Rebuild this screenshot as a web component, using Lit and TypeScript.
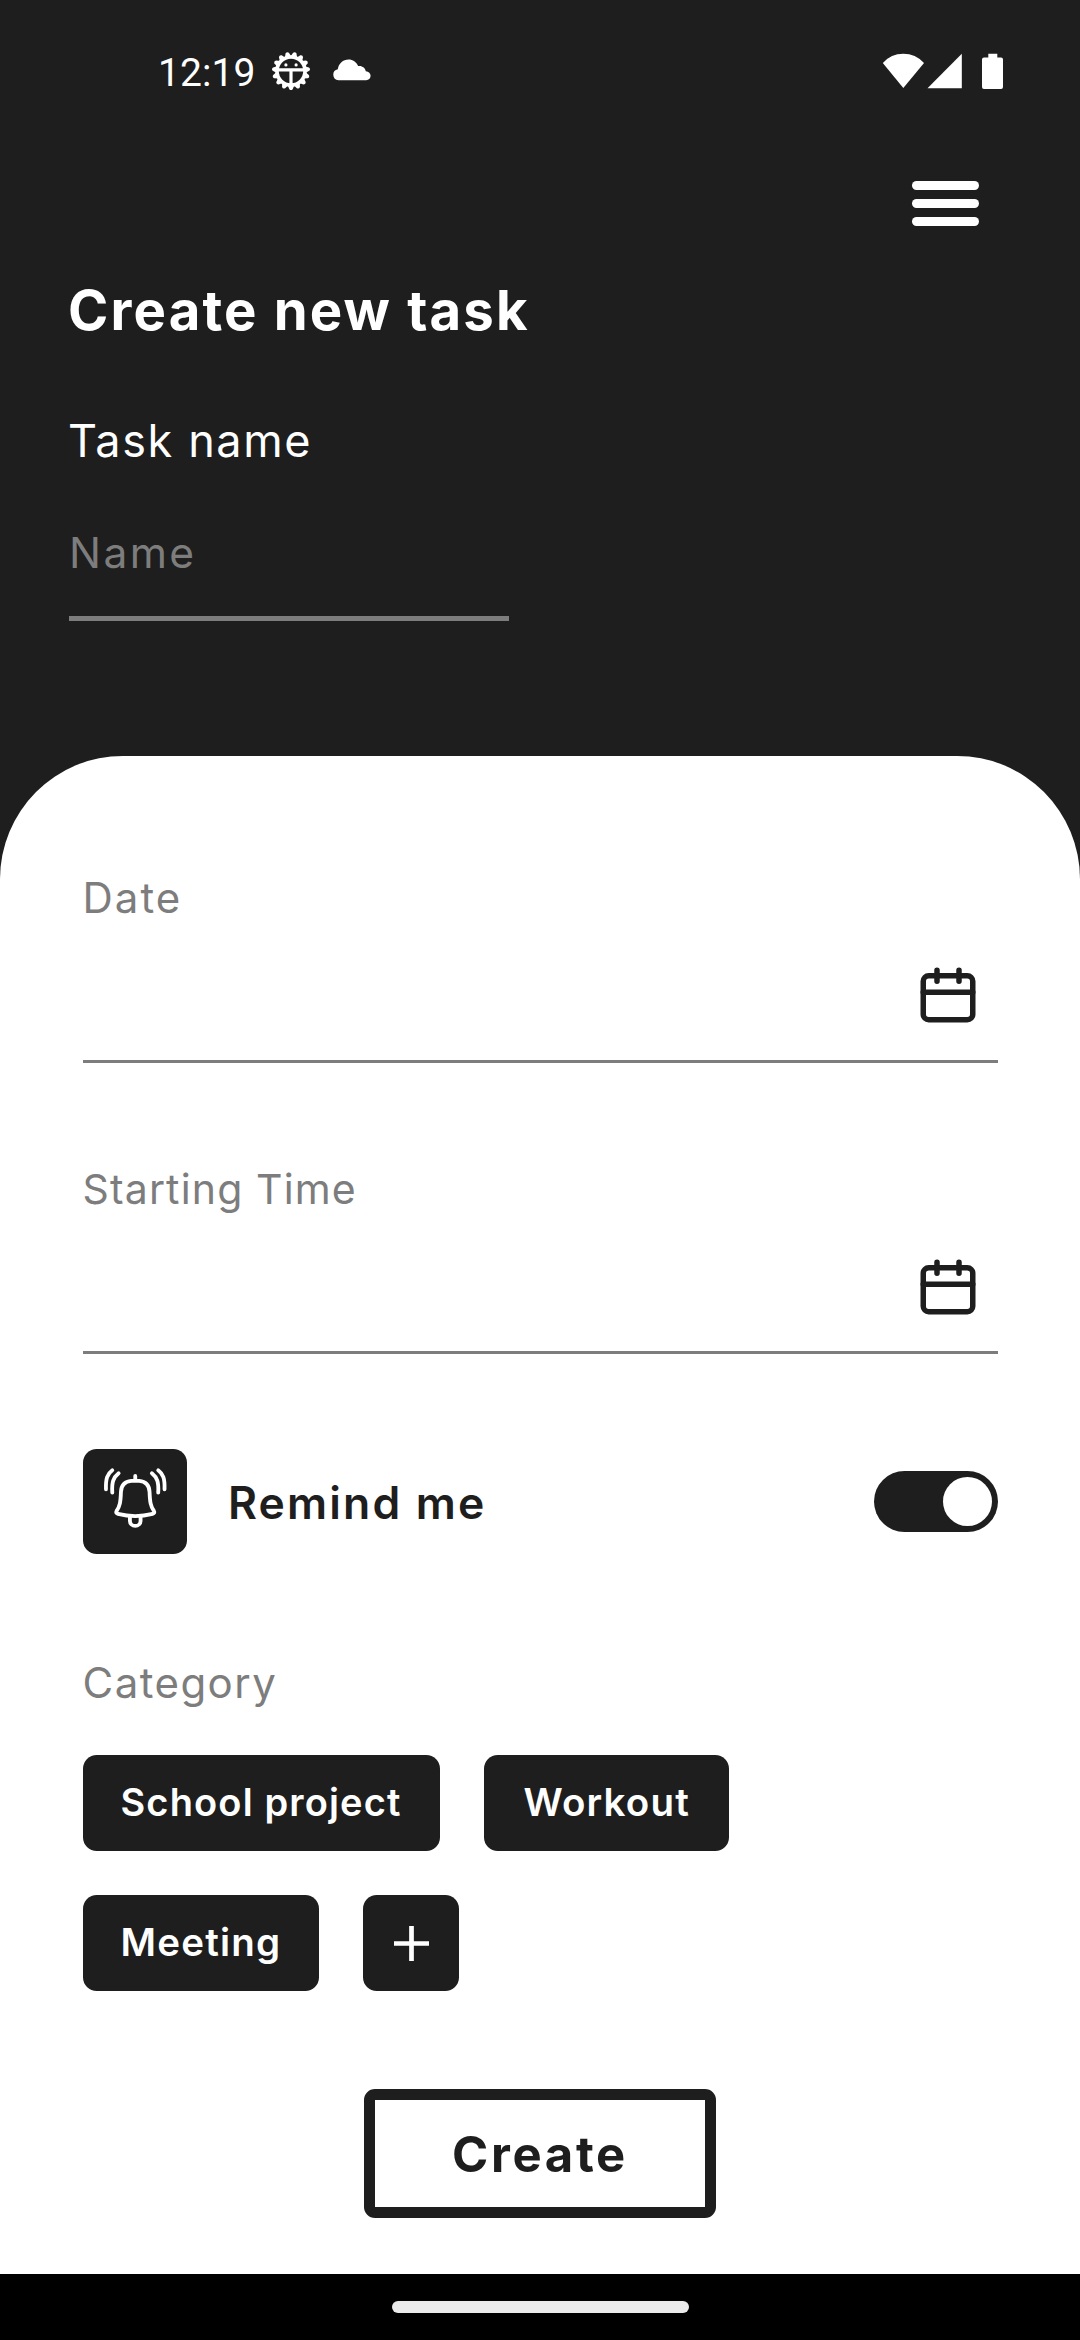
import { LitElement, html, css, svg } from 'lit';
import { customElement, property, state } from 'lit/decorators.js';
import { classMap } from 'lit/directives/class-map.js';

const gearTeeth = Array.from({ length: 15 }, (_, i) => 90 + i * 24);

@customElement('status-bar')
class StatusBar extends LitElement {
  static styles = css`
    :host {
      display: flex;
      align-items: center;
      height: 142px;
      box-sizing: border-box;
      padding: 0 76px 0 158px;
      color: #fff;
      font: 400 39px/46px Roboto, sans-serif;
    }
    svg { display: block; fill: #fff; }
    .time { letter-spacing: 0.1px; margin-top: 3px; width: 113px; }
    .gear { width: 40px; height: 40px; }
    .cloud { width: 38px; height: 22px; margin-left: 22px; margin-top: -2px; }
    .system { width: 122px; height: 38px; margin-left: auto; }
  `;

  render() {
    return html`
      <span class="time">12:19</span>
      <svg class="gear" viewBox="0 0 40 40">
        <circle cx="20" cy="20" r="14" fill="none" stroke="#fff" stroke-width="3.600"></circle>
        ${gearTeeth.map(
          (a) => svg`<path d="M34 16.600 L38.200 18.300 Q40 20 38.200 21.700 L34 23.400Z" transform="rotate(${a} 20 20)"></path>`,
        )}
        <path d="M7 17.200h26v3.200H21.600V33h-3.200V20.400H7z"></path>
        <circle cx="14.900" cy="13.900" r="1.600"></circle>
        <circle cx="25.100" cy="13.900" r="1.600"></circle>
      </svg>
      <svg class="cloud" viewBox="0 0 38 22">
        <path d="M5.500 21.200A5.500 5.500 0 0 1 4.800 10.300C5.600 4.600 10 .6 15.600.6c4.200 0 7.800 2.500 9.500 6.400C29 6.300 32.300 8.800 32.800 12.200 35.800 12.500 37.600 14.500 37.600 16.800 37.600 19.300 35.700 21.200 33.200 21.200Z"></path>
      </svg>
      <svg class="system" viewBox="0 0 122 38">
        <path d="M.8 11Q9 1.800 21.300 1.800T42 11L21.300 36Z"></path>
        <path d="M45.500 36.200L79.800 1.800V36.200Z"></path>
        <path d="M106.300 1.800h9v3.800h3.700q2 0 2 2V35q0 2-2 2h-17q-2 0-2-2V7.600q0-2 2-2h4.300z"></path>
      </svg>
    `;
  }
}

@customElement('picker-field')
class PickerField extends LitElement {
  @property() label = '';

  static styles = css`
    :host { display: block; border-bottom: 3px solid #7d7d7d; height: 186.400px; }
    .label {
      padding-bottom: 1px;
      font-size: var(--label-size, 42px);
      line-height: 49px;
      color: #7d7d7d;
      letter-spacing: var(--tracking, 2px);
    }
    .value { display: flex; justify-content: flex-end; padding: 39px 16.500px 0 0; }
    svg { width: 66px; height: 66px; fill: none; stroke: #1e1e1e; stroke-width: 2; stroke-linecap: round; }
  `;

  render() {
    return html`
      <div class="label">${this.label}</div>
      <div class="value">
        <svg viewBox="0 0 24 24">
          <rect x="3" y="5" width="18" height="16" rx="2"></rect>
          <path d="M16 3v4M8 3v4M3 11h18"></path>
        </svg>
      </div>
    `;
  }
}

@customElement('app-root')
class AppRoot extends LitElement {
  @state() private remind = true;

  static styles = css`
    :host {
      display: flex;
      flex-direction: column;
      height: 2340px;
      overflow: hidden;
      background: #1e1e1e;
      color: #1e1e1e;
      font-family: Inter, "Liberation Sans", sans-serif;
    }
    .header {
      display: flex;
      flex-direction: column;
      height: 614px;
      box-sizing: border-box;
      padding: 39px 69px 0;
      color: #fff;
    }
    .menu {
      align-self: flex-end;
      display: flex;
      flex-direction: column;
      gap: 9px;
      width: 66.500px;
      margin-right: 32.500px;
    }
    .menu i { height: 9px; border-radius: 5px; background: #fff; }
    h1 { margin: 54px 0 0 -1px; font-size: 54.500px; line-height: 60px; font-weight: 700; letter-spacing: 2.150px; }
    .title { margin: 76px 0 0 -1px; font-size: 45px; line-height: 50px; letter-spacing: 1.600px; }
    .name {
      margin-top: 62px;
      width: 440px;
      height: 88px;
      border-bottom: 5.500px solid #7d7d7d;
      color: #7d7d7d;
      font-size: 42.500px;
      line-height: 50px;
      letter-spacing: 2.400px;
    }
    .panel {
      display: flex;
      flex-direction: column;
      height: 1518px;
      box-sizing: border-box;
      padding: 117.400px 82.500px 0;
      border-radius: 123px 123px 0 0;
      background: #fff;
    }
    .date { --tracking: 2px; }
    .start { --tracking: 1.150px; --label-size: 41px; margin-top: 102px; }
    .remind { display: flex; align-items: center; margin-top: 95.200px; }
    .bell { width: 104.500px; height: 104.500px; border-radius: 13.750px; background: #1e1e1e; }
    .bell svg { display: block; width: 100%; height: 100%; fill: none; stroke: #fff; stroke-width: 11.500; stroke-linecap: round; stroke-linejoin: round; }
    .remind-label { margin: 3px 0 0 41px; font-size: 44.500px; line-height: 50px; font-weight: 600; letter-spacing: 2.150px; }
    .toggle {
      display: flex;
      justify-content: flex-start;
      margin-left: auto;
      width: 123.750px;
      height: 60.500px;
      box-sizing: border-box;
      padding: 5.500px;
      border-radius: 31px;
      background: #1e1e1e;
    }
    .toggle.on { justify-content: flex-end; }
    .toggle i { width: 49.500px; height: 49.500px; border-radius: 50%; background: #fff; }
    .caption { margin-top: 104.500px; font-size: 42px; line-height: 50px; color: #7d7d7d; letter-spacing: 1.450px; }
    .chips { display: grid; gap: 44px; margin-top: 46.600px; }
    .row { display: flex; gap: 44px; }
    .chip {
      height: 96.250px;
      box-sizing: border-box;
      padding: 0 38px;
      border-radius: 13.750px;
      background: #1e1e1e;
      color: #fff;
      font-size: 38.500px;
      line-height: 94px;
      font-weight: 600;
      white-space: nowrap;
    }
    .school { width: 357.500px; font-size: 38px; letter-spacing: 1.150px; }
    .workout { width: 245px; letter-spacing: 1.150px; padding-left: 39.500px; }
    .meeting { width: 236.500px; letter-spacing: 1.200px; }
    .add { display: grid; place-items: center; width: 96.250px; padding: 0; }
    .add svg { width: 35px; height: 35px; stroke: #fff; stroke-width: 4.700; }
    .create {
      align-self: center;
      display: grid;
      place-items: center;
      width: 352px;
      height: 129.250px;
      box-sizing: border-box;
      margin-top: 97.500px;
      padding-top: 2px;
      border: 11px solid #1e1e1e;
      border-radius: 11px;
      font-size: 49px;
      font-weight: 700;
      letter-spacing: 2.700px;
      line-height: 60px;
    }
    .nav { display: flex; justify-content: center; height: 66px; padding-top: 27px; box-sizing: border-box; background: #000; }
    .nav i { width: 297px; height: 12px; border-radius: 6px; background: #ebebeb; }
  `;

  render() {
    return html`
      <status-bar></status-bar>
      <div class="header">
        <div class="menu"><i></i><i></i><i></i></div>
        <h1>Create new task</h1>
        <div class="title">Task name</div>
        <div class="name">Name</div>
      </div>
      <div class="panel">
        <picker-field class="date" label="Date"></picker-field>
        <picker-field class="start" label="Starting Time"></picker-field>
        <div class="remind">
          <div class="bell">
            <svg viewBox="67 57 314 314">
              <path d="M224 138v10"></path>
              <path d="M212 153H236C257 155 266 167 267 186C268 216 270 228 280 243Q284 250 276 252Q224 265 172 252Q164 250 168 243C178 228 180 216 181 186C182 167 191 155 212 153Z"></path>
              <path d="M208 262V273A16 15 0 0 0 240 273V262"></path>
              <path d="M155 121C140 132 135 146 136 178M174 130C158 143 153 156 155 188"></path>
              <path d="M293 121C308 132 313 146 312 178M274 130C290 143 295 156 293 188"></path>
            </svg>
          </div>
          <div class="remind-label">Remind me</div>
          <div class=${classMap({ toggle: true, on: this.remind })} @click=${() => (this.remind = !this.remind)}><i></i></div>
        </div>
        <div class="caption">Category</div>
        <div class="chips">
          <div class="row">
            <div class="chip school">School project</div>
            <div class="chip workout">Workout</div>
          </div>
          <div class="row">
            <div class="chip meeting">Meeting</div>
            <div class="chip add"><svg viewBox="0 0 35 35"><path d="M17.500 0V35M0 17.500H35"></path></svg></div>
          </div>
        </div>
        <div class="create">Create</div>
      </div>
      <div class="nav"><i></i></div>
    `;
  }
}
